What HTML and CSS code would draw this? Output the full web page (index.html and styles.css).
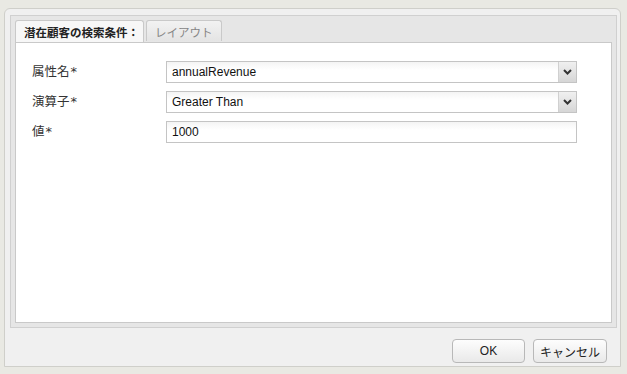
FILE: index.html
```html
<!DOCTYPE html>
<html lang="ja">
<head>
    <meta charset="UTF-8">
    <title>潜在顧客の検索条件</title>
    <link rel="stylesheet" href="styles.css">
</head>
<body>
    <div class="dialog">
        <div class="dialog-body">
            <div class="tab-panel">
                <div class="tab-strip">
                    <div class="tab active">潜在顧客の検索条件：</div>
                    <div class="tab">レイアウト</div>
                </div>
                <div class="tab-content">
                    <div class="form-row">
                        <label>属性名<span class="req">*</span></label>
                        <div class="combo">
                            <span class="combo-value">annualRevenue</span>
                            <span class="combo-trigger"><svg width="9" height="6" viewBox="0 0 9 6"><path d="M1 1 L4.5 4.5 L8 1" fill="none" stroke="#333" stroke-width="2"/></svg></span>
                        </div>
                    </div>
                    <div class="form-row">
                        <label>演算子<span class="req">*</span></label>
                        <div class="combo">
                            <span class="combo-value">Greater Than</span>
                            <span class="combo-trigger"><svg width="9" height="6" viewBox="0 0 9 6"><path d="M1 1 L4.5 4.5 L8 1" fill="none" stroke="#333" stroke-width="2"/></svg></span>
                        </div>
                    </div>
                    <div class="form-row">
                        <label>値<span class="req">*</span></label>
                        <div class="text-field">1000</div>
                    </div>
                </div>
            </div>
            <div class="footer">
                <button class="btn btn-ok">OK</button>
                <button class="btn btn-cancel">キャンセル</button>
            </div>
        </div>
    </div>
</body>
</html>
```

FILE: styles.css
```css
body {
    margin: 0;
    background-color: #e9e9e3;
    font-family: "Liberation Sans", "Noto Sans CJK JP", sans-serif;
    font-size: 12px;
    color: #222;
}
.dialog {
    margin: 8px 6px 7px 4px;
    height: 359px;
    box-sizing: border-box;
    border: 1px solid #cfcfca;
    border-radius: 6px 6px 0 0;
    background-color: #f0f0f0;
    padding: 6px 3px 3px 5px;
}
.dialog-body {
    display: flex;
    flex-direction: column;
    height: 100%;
}
.tab-panel {
    border: 1px solid #d0d0d0;
    background-color: #e6e6e6;
    padding: 0 4px 4px 4px;
    display: flex;
    flex-direction: column;
    height: 314px;
    box-sizing: border-box;
}
.tab-strip {
    display: flex;
    gap: 2px;
    padding-top: 4px;
    height: 26px;
    box-sizing: border-box;
}
.tab {
    border: 1px solid #c9c9c9;
    border-bottom: none;
    border-radius: 3px 3px 0 0;
    padding: 3px 8px 0 8px;
    height: 17px;
    background: linear-gradient(#f2f2f2, #e4e4e4);
    color: #858585;
    font-size: 11.5px;
}
.tab.active {
    background: #f7f7f7;
    color: #222;
    font-weight: bold;
    height: 19px;
    padding: 3px 4px 0 8px;
    font-size: 11.5px;
}
.tab-content {
    flex: 1;
    background-color: #fff;
    border: 1px solid #c9c9c9;
    padding: 18px 34px 0 16px;
}
.form-row {
    display: flex;
    align-items: center;
    margin-bottom: 8px;
}
.form-row label {
    width: 134px;
    font-size: 12.5px;
    color: #333;
    position: relative;
    top: -2px;
}
.req {
    font-family: "DejaVu Sans", sans-serif;
    font-size: 13px;
    margin-left: 1px;
}
.combo, .text-field {
    flex: 1;
    height: 22px;
    box-sizing: border-box;
    border: 1px solid #c4c4c4;
    background: linear-gradient(#f4f4f4, #fff 40%);
    display: flex;
    align-items: center;
}
.combo-value, .text-field {
    padding-left: 5px;
    font-size: 12px;
    color: #111;
}
.combo-value {
    flex: 1;
}
.combo-trigger {
    width: 17px;
    height: 20px;
    border-left: 1px solid #d0d0d0;
    background: linear-gradient(#f0f0f0, #d6d6d6);
    display: flex;
    align-items: center;
    justify-content: center;
}
.footer {
    display: flex;
    justify-content: flex-end;
    gap: 8px;
    padding: 11px 10px 0 0;
}
.btn {
    height: 24px;
    border: 1px solid #b8b8b8;
    border-radius: 4px;
    background: linear-gradient(#fdfdfd, #e9e9e9);
    font-family: "Liberation Sans", "Noto Sans CJK JP", sans-serif;
    font-size: 12px;
    color: #222;
    padding: 0;
}
.btn-ok {
    width: 73px;
}
.btn-cancel {
    width: 74px;
}
```
